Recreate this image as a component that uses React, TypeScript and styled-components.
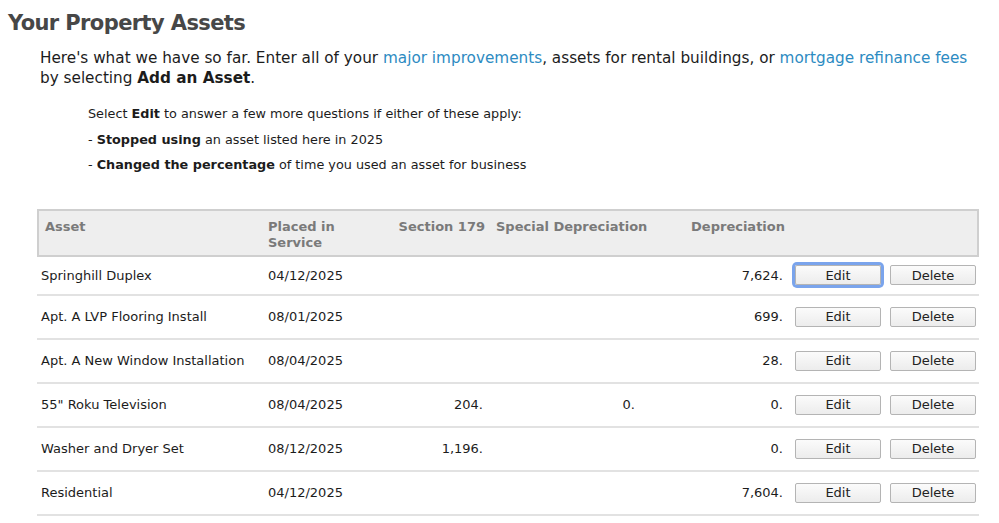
import React from "react";
import styled, { createGlobalStyle } from "styled-components";

interface Asset {
  name: string;
  placed: string;
  section179?: string;
  special?: string;
  depreciation: string;
}

const assets: Asset[] = [
  { name: "Springhill Duplex", placed: "04/12/2025", depreciation: "7,624." },
  { name: "Apt. A LVP Flooring Install", placed: "08/01/2025", depreciation: "699." },
  { name: "Apt. A New Window Installation", placed: "08/04/2025", depreciation: "28." },
  { name: '55" Roku Television', placed: "08/04/2025", section179: "204.", special: "0.", depreciation: "0." },
  { name: "Washer and Dryer Set", placed: "08/12/2025", section179: "1,196.", depreciation: "0." },
  { name: "Residential", placed: "04/12/2025", depreciation: "7,604." },
];

const GlobalStyle = createGlobalStyle`
  body {
    margin: 0;
    background: #fff;
    font-family: "DejaVu Sans", "Liberation Sans", sans-serif;
    color: #222;
  }
`;

export default function App() {
  return (
    <>
      <GlobalStyle />
      <Page>
        <Title>Your Property Assets</Title>
        <Intro>
          Here's what we have so far. Enter all of your <Link>major improvements</Link>, assets for
          rental buildings, or <Link>mortgage refinance fees</Link> by selecting <b>Add an Asset</b>.
        </Intro>
        <Instructions>
          <li>
            Select <b>Edit</b> to answer a few more questions if either of these apply:
          </li>
          <li>
            - <b>Stopped using</b> an asset listed here in 2025
          </li>
          <li>
            - <b>Changed the percentage</b> of time you used an asset for business
          </li>
        </Instructions>

        <Table>
          <HeaderRow>
            <HeadCell>Asset</HeadCell>
            <HeadCell>
              Placed in
              <br />
              Service
            </HeadCell>
            <HeadCell $align="right">Section 179</HeadCell>
            <HeadCell>Special Depreciation</HeadCell>
            <HeadCell $align="right">Depreciation</HeadCell>
            <HeadCell />
          </HeaderRow>
          {assets.map((asset, i) => (
            <Row key={asset.name} $first={i === 0}>
              <NameCell>{asset.name}</NameCell>
              <Cell>{asset.placed}</Cell>
              <Cell $align="right">{asset.section179}</Cell>
              <Cell $align="right">{asset.special}</Cell>
              <Cell $align="right">{asset.depreciation}</Cell>
              <Actions>
                <Button $focused={i === 0}>Edit</Button>
                <Button>Delete</Button>
              </Actions>
            </Row>
          ))}
        </Table>
      </Page>
    </>
  );
}

const Page = styled.div`
  padding: 8px 0 0 8px;
`;

const Title = styled.h1`
  margin: 0;
  font-size: 21px;
  letter-spacing: -0.6px;
  line-height: 30px;
  font-weight: bold;
  color: #474747;
`;

const Intro = styled.p`
  margin: 10px 0 0 32px;
  width: 940px;
  font-size: 15.25px;
  line-height: 20px;
  color: #1c1c1c;

  b {
    font-weight: bold;
  }
`;

const Link = styled.span`
  color: #2d8bc2;
`;

const Instructions = styled.ul`
  list-style: none;
  margin: 13px 0 0 80px;
  padding: 0;
  font-size: 12.8px;
  line-height: 25.5px;
  color: #1c1c1c;
`;

const Table = styled.div`
  margin: 31px 0 0 29px;
  width: 942px;
`;

const columns = "223px 130px 98px 152px 148px 1fr";

const HeaderRow = styled.div`
  display: grid;
  grid-template-columns: ${columns};
  height: 48px;
  box-sizing: border-box;
  background: #eeeeee;
  border: 2px solid #cfcfcf;
`;

const HeadCell = styled.div<{ $align?: "left" | "right" }>`
  padding: 8px 5px 0 6px;
  font-size: 13px;
  line-height: 16px;
  font-weight: bold;
  color: #7a7a7a;
  white-space: nowrap;
  text-align: ${(p) => p.$align ?? "left"};
`;

const Row = styled.div<{ $first?: boolean }>`
  display: grid;
  grid-template-columns: ${columns};
  align-items: center;
  height: ${(p) => (p.$first ? "39px" : "44px")};
  box-sizing: border-box;
  border-bottom: 2px solid #e2e2e2;
  font-size: 13px;
`;

const Cell = styled.div<{ $align?: "left" | "right" }>`
  padding: 0 5px 0 8px;
  text-align: ${(p) => p.$align ?? "left"};
  color: #1c1c1c;
`;

const NameCell = styled(Cell)`
  padding-left: 4px;
`;

const Actions = styled.div`
  display: flex;
  gap: 9px;
  padding-left: 7px;
`;

const Button = styled.button<{ $focused?: boolean }>`
  width: 86px;
  height: 20px;
  padding: 0;
  font-family: inherit;
  font-size: 13px;
  color: #222;
  background: linear-gradient(#fbfbfb, #ececec);
  border: 1px solid #b4b4b4;
  border-radius: 2px;
  box-shadow: ${(p) => (p.$focused ? "0 0 0 3px #7aa4ec" : "none")};
  cursor: pointer;
`;
